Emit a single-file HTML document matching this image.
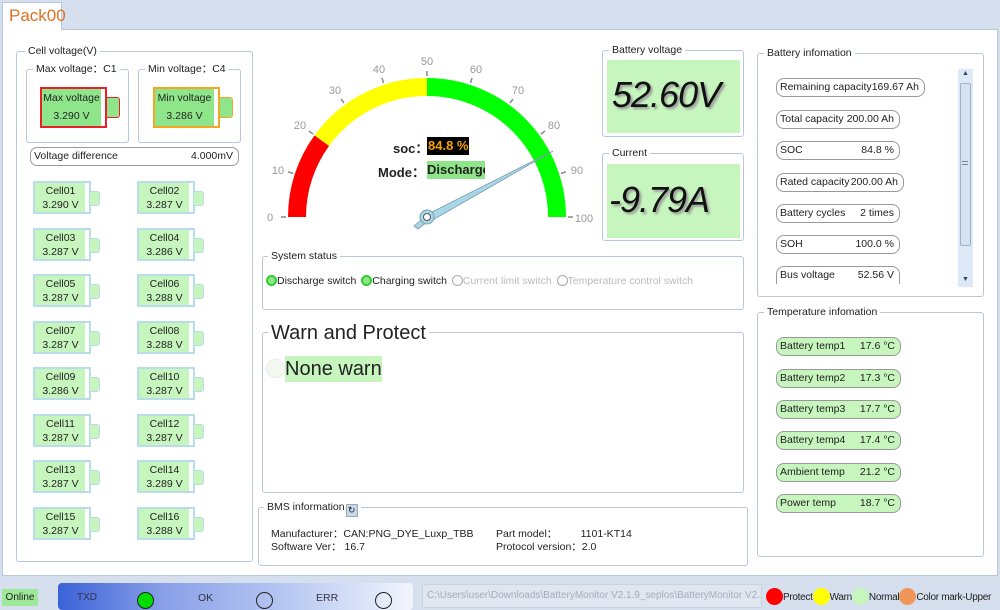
<!DOCTYPE html>
<html><head><meta charset="utf-8"><style>
*{box-sizing:border-box;margin:0;padding:0}
body{width:1000px;height:610px;overflow:hidden;background:#d5dfee;font-family:"Liberation Sans",sans-serif;font-size:10.5px;color:#222;position:relative}
.a{position:absolute}
.grp{position:absolute;border:1px solid #b8c8dc;border-radius:3px}
.lg{position:absolute;top:-7px;left:8px;background:#fff;padding:0 3px;font-size:10.5px;color:#222;white-space:nowrap;line-height:13px}
.cell{position:absolute;width:58px;height:33px;background:#c6f5bd;border:2px solid #b9dde8;box-shadow:inset -4px 0 0 #fff;text-align:center;font-size:10.5px;line-height:14px;padding-top:1px;padding-right:3px}
.cell:after{content:"";position:absolute;right:-11px;top:8px;width:9px;height:13px;background:#c6f5bd;border:1px solid #b9dde8;border-left:none;border-radius:0 3px 3px 0}
.pill{position:absolute;height:19px;border:1px solid #999;border-radius:8px;background:#fff;font-size:10.5px;line-height:17px;padding:0 3px;white-space:nowrap}
.pill b{font-weight:normal;position:absolute;right:5px;top:0}
.tp{background:#c6f5bd}
.big{position:absolute;background:#c6f5bd;font-style:italic;font-size:36px;color:#111;text-shadow:2px 2px 2px #999;padding-left:5px;letter-spacing:-1px}
.led{display:inline-block;width:11px;height:11px;border-radius:50%;vertical-align:-2px}
</style></head><body>
<div class="a" style="left:2px;top:2px;width:60px;height:28px;background:#fff;border:1px solid #b8c8dc;border-bottom:none;color:#e07020;font-size:17px;line-height:26px;padding-left:6px;z-index:2">Pack00</div>
<div class="a" style="left:2px;top:29px;width:996px;height:547px;background:#fff;border:1px solid #b8c8dc"></div>

<div class="grp" style="left:16px;top:51px;width:237px;height:511px"><span class="lg">Cell voltage(V)</span></div>
<div class="grp" style="left:26px;top:69px;width:103px;height:74px"><span class="lg" style="left:6px">Max voltage：C1</span></div>
<div class="grp" style="left:138px;top:69px;width:103px;height:74px"><span class="lg" style="left:6px">Min voltage：C4</span></div>
<div class="a" style="left:40px;top:87px;width:67px;height:41px;background:#8fe68a;border:2px solid #e8202a;box-shadow:inset -4px 0 0 #fff;text-align:center;font-size:10.5px;line-height:18px;padding-right:4px">Max voltage<br>3.290 V</div>
<div class="a" style="left:107px;top:97px;width:13px;height:21px;background:#8fe68a;border:1px solid #e8202a;border-left:none;border-radius:0 3px 3px 0"></div>
<div class="a" style="left:153px;top:87px;width:67px;height:41px;background:#8fe68a;border:2px solid #f5a623;box-shadow:inset -4px 0 0 #fff;text-align:center;font-size:10.5px;line-height:18px;padding-right:4px">Min voltage<br>3.286 V</div>
<div class="a" style="left:220px;top:97px;width:13px;height:21px;background:#8fe68a;border:1px solid #f5a623;border-left:none;border-radius:0 3px 3px 0"></div>
<div class="pill" style="left:30px;top:147px;width:209px;height:19px;border-radius:7px">Voltage difference<b>4.000mV</b></div>

<div class="cell" style="left:33px;top:181px">Cell01<br>3.290 V</div>
<div class="cell" style="left:137px;top:181px">Cell02<br>3.287 V</div>
<div class="cell" style="left:33px;top:228px">Cell03<br>3.287 V</div>
<div class="cell" style="left:137px;top:228px">Cell04<br>3.286 V</div>
<div class="cell" style="left:33px;top:274px">Cell05<br>3.287 V</div>
<div class="cell" style="left:137px;top:274px">Cell06<br>3.288 V</div>
<div class="cell" style="left:33px;top:321px">Cell07<br>3.287 V</div>
<div class="cell" style="left:137px;top:321px">Cell08<br>3.288 V</div>
<div class="cell" style="left:33px;top:367px">Cell09<br>3.286 V</div>
<div class="cell" style="left:137px;top:367px">Cell10<br>3.287 V</div>
<div class="cell" style="left:33px;top:414px">Cell11<br>3.287 V</div>
<div class="cell" style="left:137px;top:414px">Cell12<br>3.287 V</div>
<div class="cell" style="left:33px;top:460px">Cell13<br>3.287 V</div>
<div class="cell" style="left:137px;top:460px">Cell14<br>3.289 V</div>
<div class="cell" style="left:33px;top:507px">Cell15<br>3.287 V</div>
<div class="cell" style="left:137px;top:507px">Cell16<br>3.288 V</div>

<svg class="a" style="left:260px;top:50px" width="340" height="190" viewBox="260 50 340 190">
<g fill="none" stroke-width="18">
<path d="M297 217 A130 130 0 0 1 321.8 140.6" stroke="#f00"/>
<path d="M321.8 140.6 A130 130 0 0 1 427 87" stroke="#ff0"/>
<path d="M427 87 A130 130 0 0 1 557 217" stroke="#0f0"/>
</g>
<g stroke="#888" stroke-width="1.5">
<line x1="281" y1="217" x2="286" y2="217"/><line x1="288" y1="171.8" x2="293" y2="173.4"/><line x1="309" y1="131" x2="313" y2="134"/><line x1="341" y1="99" x2="344" y2="103"/><line x1="382" y1="78" x2="383.5" y2="83"/><line x1="427" y1="71" x2="427" y2="76"/><line x1="472" y1="78" x2="470.5" y2="83"/><line x1="513" y1="99" x2="510" y2="103"/><line x1="545" y1="131" x2="541" y2="134"/><line x1="566" y1="171.8" x2="561" y2="173.4"/><line x1="568" y1="217" x2="573" y2="217"/>
</g>
<g fill="#999" font-size="11" text-anchor="middle" font-family="Liberation Sans">
<text x="270" y="221">0</text><text x="278" y="174">10</text><text x="300" y="129">20</text><text x="335" y="94">30</text><text x="379" y="73">40</text><text x="427" y="65">50</text><text x="476" y="73">60</text><text x="518" y="94">70</text><text x="554" y="129">80</text><text x="577" y="174">90</text><text x="584" y="222">100</text>
</g>
<polygon points="553,151 428,214 426,220 431,221" fill="#a8d8e8" stroke="#7a9aaa" stroke-width="0.8"/>
<polygon points="426,216 414,226 418,229 430,220" fill="#a8d8e8" stroke="#7a9aaa" stroke-width="0.8"/>
<circle cx="427" cy="217" r="7" fill="#a8d8e8" stroke="#7a9aaa"/>
<circle cx="427" cy="217" r="3.5" fill="#fff" stroke="#555"/>
</svg>
<div class="a" style="left:393px;top:138px;font-size:13px;font-weight:bold">soc：</div>
<div class="a" style="left:427px;top:137px;width:42px;height:18px;background:#000;color:#f5a000;font-size:13px;font-weight:bold;line-height:18px;padding-left:1px">84.8 %</div>
<div class="a" style="left:378px;top:162px;font-size:13px;font-weight:bold">Mode：</div>
<div class="a" style="left:427px;top:161px;width:58px;height:18px;background:#8fe68a;font-size:13px;font-weight:bold;line-height:18px;overflow:hidden;white-space:nowrap">Discharge</div>

<div class="grp" style="left:602px;top:50px;width:142px;height:87px"><span class="lg" style="left:6px">Battery voltage</span></div>
<div class="big" style="left:607px;top:60px;width:133px;height:73px;line-height:70px">52.60V</div>
<div class="grp" style="left:602px;top:153px;width:142px;height:88px"><span class="lg" style="left:6px">Current</span></div>
<div class="big" style="left:607px;top:164px;width:133px;height:74px;line-height:72px;padding-left:2px">-9.79A</div>

<div class="grp" style="left:757px;top:53px;width:227px;height:244px"><span class="lg" style="left:6px">Battery infomation</span></div>
<div class="pill" style="left:776px;top:78px;width:149px">Remaining capacity<b>169.67 Ah</b></div>
<div class="pill" style="left:776px;top:110px;width:124px">Total capacity<b>200.00 Ah</b></div>
<div class="pill" style="left:776px;top:141px;width:124px">SOC<b>84.8 %</b></div>
<div class="pill" style="left:776px;top:173px;width:128px">Rated capacity<b>200.00 Ah</b></div>
<div class="pill" style="left:776px;top:204px;width:124px">Battery cycles<b>2 times</b></div>
<div class="pill" style="left:776px;top:235px;width:124px">SOH<b>100.0 %</b></div>
<div class="pill" style="left:776px;top:266px;width:124px;height:18px;border-bottom:none;border-radius:8px 8px 0 0">Bus voltage<b>52.56 V</b></div>
<div class="a" style="left:958px;top:69px;width:15px;height:218px;background:#dde9f7"></div>
<div class="a" style="left:960px;top:83px;width:11px;height:163px;background:#d6e2f0;border:1px solid #9fb2c8;border-radius:2px"></div>
<div class="a" style="left:962px;top:70px;font-size:7px;color:#345">▲</div>
<div class="a" style="left:962px;top:276px;font-size:7px;color:#345">▼</div>
<div class="a" style="left:962px;top:161px;width:6px;height:4px;border-top:1px solid #789;border-bottom:1px solid #789"></div>

<div class="grp" style="left:757px;top:312px;width:227px;height:245px"><span class="lg" style="left:6px">Temperature infomation</span></div>
<div class="pill tp" style="left:776px;top:337px;width:125px">Battery temp1<b>17.6 °C</b></div>
<div class="pill tp" style="left:776px;top:369px;width:125px">Battery temp2<b>17.3 °C</b></div>
<div class="pill tp" style="left:776px;top:400px;width:125px">Battery temp3<b>17.7 °C</b></div>
<div class="pill tp" style="left:776px;top:431px;width:125px">Battery temp4<b>17.4 °C</b></div>
<div class="pill tp" style="left:776px;top:463px;width:125px">Ambient temp<b>21.2 °C</b></div>
<div class="pill tp" style="left:776px;top:494px;width:125px">Power temp<b>18.7 °C</b></div>

<div class="grp" style="left:262px;top:256px;width:482px;height:54px"><span class="lg" style="left:5px">System status</span></div>
<div class="a" style="left:266px;top:275px;font-size:10.5px;white-space:nowrap;line-height:12px">
<span class="led" style="background:#8fe68a;border:2px solid #3c3"></span>Discharge switch <span class="led" style="background:#8fe68a;border:2px solid #3c3;margin-left:2px"></span>Charging switch <span class="led" style="border:1px solid #aaa;margin-left:2px"></span><span style="color:#bbb">Current limit switch</span> <span class="led" style="border:1px solid #aaa;margin-left:2px"></span><span style="color:#bbb">Temperature control switch</span></div>

<div class="grp" style="left:262px;top:332px;width:482px;height:161px"><span class="lg" style="left:5px;top:-11px;font-size:20px;line-height:22px">Warn and Protect</span></div>
<div class="a" style="left:266px;top:359px;width:19px;height:19px;border-radius:50%;background:#f3f9f1;border:1px solid #e6ede4"></div>
<div class="a" style="left:285px;top:356px;width:97px;height:26px;background:#c6f5bd;font-size:20px;line-height:26px">None warn</div>

<div class="grp" style="left:258px;top:507px;width:490px;height:59px"><span class="lg" style="left:5px">BMS information<span style="display:inline-block;width:12px;height:13px;background:#c8d8ea;border:1px solid #9ab;vertical-align:-3px;margin-left:1px;font-size:9px;line-height:11px;text-align:center">↻</span></span></div>
<div class="a" style="left:271px;top:528px;line-height:13px;white-space:nowrap">Manufacturer：CAN:PNG_DYE_Luxp_TBB<br>Software Ver： 16.7</div>
<div class="a" style="left:496px;top:528px;line-height:13px;white-space:nowrap">Part model：&nbsp;&nbsp;&nbsp;&nbsp;&nbsp;&nbsp;&nbsp;&nbsp;1101-KT14<br>Protocol version：2.0</div>

<div class="a" style="left:0;top:578px;width:1000px;height:32px;background:#d5dfee"></div>
<div class="a" style="left:2px;top:589px;width:36px;height:17px;background:#9ee89a;font-size:10px;line-height:17px;text-align:center">Online</div>
<div class="a" style="left:58px;top:583px;width:355px;height:27px;border-radius:4px;background:linear-gradient(90deg,#3a62d8 0%,#8aa0e8 30%,#b8c8f2 65%,#f2f5fd 100%)"></div>
<div class="a" style="left:77px;top:592px;color:#334;font-size:10px">TXD</div>
<div class="a" style="left:137px;top:592px;width:17px;height:17px;border-radius:50%;background:#0d0;border:1px solid #222"></div>
<div class="a" style="left:198px;top:592px;color:#334">OK</div>
<div class="a" style="left:256px;top:592px;width:17px;height:17px;border-radius:50%;border:1px solid #222"></div>
<div class="a" style="left:316px;top:592px;color:#334">ERR</div>
<div class="a" style="left:375px;top:592px;width:17px;height:17px;border-radius:50%;border:1px solid #222"></div>
<div class="a" style="left:422px;top:584px;width:340px;height:24px;background:#dfe6f0;border:1px solid #c8d2e0;color:#aab;font-size:10px;line-height:22px;padding-left:4px;white-space:nowrap;overflow:hidden">C:\Users\user\Downloads\BatteryMonitor V2.1.9_seplos\BatteryMonitor V2.1</div>
<div class="a" style="left:766px;top:588px;font-size:10px;line-height:18px;white-space:nowrap;letter-spacing:-0.3px">
<span class="led" style="width:17px;height:17px;background:#f00;vertical-align:-5px"></span>Protect<span class="led" style="width:17px;height:17px;background:#ff0;vertical-align:-5px"></span>Warn<span class="led" style="width:17px;height:17px;background:#c6f5bd;vertical-align:-5px"></span>Normal<span class="led" style="width:17px;height:17px;background:#f0965a;vertical-align:-5px"></span>Color mark-Upper</div>
</body></html>
